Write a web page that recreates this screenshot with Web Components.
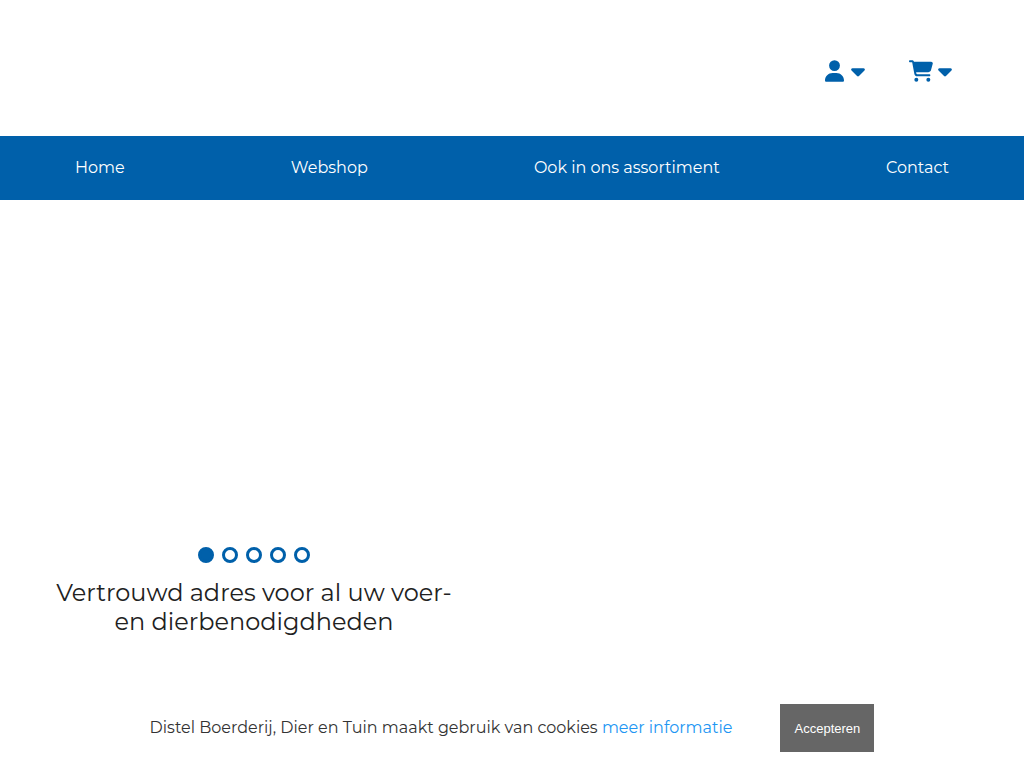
<!DOCTYPE html>
<html lang="nl">
<head>
<meta charset="utf-8">
<meta name="viewport" content="width=device-width, initial-scale=1">
<title>Distel Boerderij, Dier en Tuin</title>
<style>
:root { --brand: #0060aa; }
body { margin: 0; background: #fff; color: #212121; font: 16px/24px Montserrat, Inter, sans-serif; }
</style>
</head>
<body>
<shop-header></shop-header>
<shop-nav>
  <nav-link href="#home">Home</nav-link>
  <nav-link href="#webshop">Webshop</nav-link>
  <nav-link href="#assortiment">Ook in ons assortiment</nav-link>
  <nav-link href="#contact">Contact</nav-link>
</shop-nav>
<shop-hero>Vertrouwd adres voor al uw voer-<br>en dierbenodigdheden</shop-hero>
<cookie-bar>Distel Boerderij, Dier en Tuin maakt gebruik van cookies</cookie-bar>
<script>
const define = (name, markup, setup) => customElements.define(name, class extends HTMLElement {
  constructor() {
    super();
    this.attachShadow({ mode: 'open' }).innerHTML = markup;
  }
  connectedCallback() { if (setup) setup(this); }
});

define('menu-caret', `
<style>:host { display: block; } svg { display: block; width: 14px; height: 22px; fill: currentColor; }</style>
<svg viewBox="0 0 320 512" aria-hidden="true"><path d="M137.4 374.6c12.500 12.500 32.800 12.500 45.300 0l128-128c9.200-9.200 11.900-22.900 6.900-34.900s-16.600-19.800-29.600-19.800L32 192c-12.900 0-24.600 7.800-29.600 19.800s-2.200 25.700 6.900 34.900l128 128z"/></svg>`);

define('shop-header', `
<style>
:host { display: flex; justify-content: flex-end; align-items: center; gap: 44px; min-height: 136px; padding: 0 72px; box-sizing: border-box; }
button { display: flex; align-items: center; gap: 7px; margin: 0; padding: 8px 0 2px; border: 0; background: none; color: var(--brand); cursor: pointer; }
svg { display: block; height: 22px; fill: currentColor; }
.user { width: 19px; }
.cart { width: 24px; }
.basket { gap: 5px; }
</style>
<button type="button" aria-label="Account">
  <svg class="user" viewBox="0 0 448 512" aria-hidden="true"><path d="M224 256A128 128 0 1 0 224 0a128 128 0 1 0 0 256zm-45.700 48C79.800 304 0 383.800 0 482.300C0 498.700 13.300 512 29.700 512H418.300c16.400 0 29.700-13.300 29.700-29.700C448 383.800 368.200 304 269.700 304H178.300z"/></svg>
  <menu-caret></menu-caret>
</button>
<button class="basket" type="button" aria-label="Winkelwagen">
  <svg class="cart" viewBox="0 0 576 512" aria-hidden="true"><path d="M0 24C0 10.700 10.700 0 24 0H69.500c22 0 41.500 12.800 50.600 32h411c26.300 0 45.500 25 38.600 50.400l-41 152.300c-8.500 31.400-37 53.300-69.500 53.300H170.700l5.400 28.500c2.200 11.300 12.100 19.500 23.600 19.500H488c13.300 0 24 10.700 24 24s-10.700 24-24 24H199.700c-34.600 0-64.300-24.600-70.700-58.500L77.400 54.500c-.7-3.800-4-6.500-7.900-6.500H24C10.700 48 0 37.300 0 24zM128 464a48 48 0 1 1 96 0 48 48 0 1 1-96 0zm336-48a48 48 0 1 1 0 96 48 48 0 1 1 0-96z"/></svg>
  <menu-caret></menu-caret>
</button>`);

define('shop-nav', `
<style>
:host { display: block; background: var(--brand); color: #fff; }
nav { display: flex; flex-wrap: wrap; justify-content: space-between; align-items: center; min-height: 64px; padding: 0 75px; }
</style>
<nav aria-label="Hoofdmenu"><slot></slot></nav>`);

define('nav-link', `
<style>
:host { display: block; }
a { display: block; padding: 20px 0; color: inherit; text-decoration: none; }
</style>
<a><slot></slot></a>`, el => { el.shadowRoot.querySelector('a').href = el.getAttribute('href'); });

define('shop-hero', `
<style>
:host { display: grid; grid-template-columns: 1fr 1fr; gap: 8px; }
.slide { display: flex; flex-direction: column; align-items: center; padding: 347px 16px 120px; }
.dots { display: flex; gap: 8px; }
.dots button { width: 16px; height: 16px; padding: 0; box-sizing: border-box; border: 3px solid var(--brand); border-radius: 50%; background: #fff; cursor: pointer; }
.dots button[aria-current] { background: var(--brand); }
h1 { margin: 15px 0 0; font-size: 24px; line-height: 29px; font-weight: 400; text-align: center; white-space: nowrap; }
</style>
<section class="slide">
  <div class="dots">
    <button type="button" aria-label="Dia 1" aria-current="true"></button>
    <button type="button" aria-label="Dia 2"></button>
    <button type="button" aria-label="Dia 3"></button>
    <button type="button" aria-label="Dia 4"></button>
    <button type="button" aria-label="Dia 5"></button>
  </div>
  <h1><slot></slot></h1>
</section>`);

define('cookie-bar', `
<style>
:host { position: fixed; left: 0; right: 0; bottom: 0; display: flex; justify-content: center; align-items: center; gap: 48px; padding: 16px; background: #fff; color: #333; }
p { margin: 0; }
a { color: #2196f3; text-decoration: none; }
button { min-width: 94px; height: 48px; padding: 0 13px; border: 0; background: #666; color: #fff; font: 13px "Liberation Sans", Arial, sans-serif; cursor: pointer; }
</style>
<p><slot></slot> <a href="#cookies">meer informatie</a></p>
<button type="button">Accepteren</button>`);
</script>
</body>
</html>
